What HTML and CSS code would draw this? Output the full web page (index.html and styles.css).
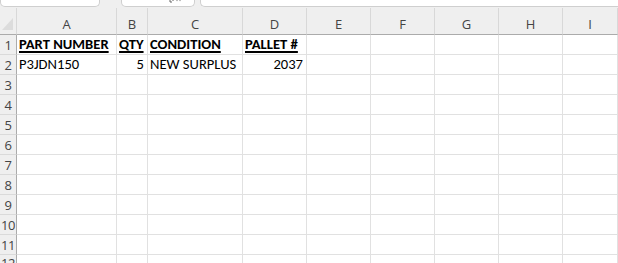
FILE: index.html
```html
<!DOCTYPE html>
<html>
<head>
<meta charset="utf-8">
<link rel="stylesheet" href="styles.css">
</head>
<body>
<div class="topbar">
  <div class="box box1"></div>
  <div class="box box2"><svg class="ghost" width="14" height="4" viewBox="0 0 14 4"><path d="M2 0 v2 h2 M5 0 v1" stroke="#666" stroke-width="1" fill="none"/><circle cx="9" cy="0.5" r="0.7" fill="#999"/><circle cx="12" cy="0.5" r="0.7" fill="#999"/></svg></div>
  <div class="box box3"></div>
</div>
<div class="sheet">
  <div class="corner"><div class="tri"></div></div>
  <div class="ch">A</div><div class="ch">B</div><div class="ch">C</div><div class="ch">D</div><div class="ch">E</div><div class="ch">F</div><div class="ch">G</div><div class="ch">H</div><div class="ch">I</div>

  <div class="rh">1</div>
  <div class="c"><span class="hd">PART NUMBER</span></div>
  <div class="c"><span class="hd">QTY</span></div>
  <div class="c"><span class="hd">CONDITION</span></div>
  <div class="c"><span class="hd">PALLET #</span></div>
  <div class="c"></div><div class="c"></div><div class="c"></div><div class="c"></div><div class="c"></div>

  <div class="rh">2</div>
  <div class="c">P3JDN150</div>
  <div class="c num">5</div>
  <div class="c">NEW SURPLUS</div>
  <div class="c num">2037</div>
  <div class="c"></div><div class="c"></div><div class="c"></div><div class="c"></div><div class="c"></div>

  <div class="rh">3</div><div class="c"></div><div class="c"></div><div class="c"></div><div class="c"></div><div class="c"></div><div class="c"></div><div class="c"></div><div class="c"></div><div class="c"></div>
  <div class="rh">4</div><div class="c"></div><div class="c"></div><div class="c"></div><div class="c"></div><div class="c"></div><div class="c"></div><div class="c"></div><div class="c"></div><div class="c"></div>
  <div class="rh">5</div><div class="c"></div><div class="c"></div><div class="c"></div><div class="c"></div><div class="c"></div><div class="c"></div><div class="c"></div><div class="c"></div><div class="c"></div>
  <div class="rh">6</div><div class="c"></div><div class="c"></div><div class="c"></div><div class="c"></div><div class="c"></div><div class="c"></div><div class="c"></div><div class="c"></div><div class="c"></div>
  <div class="rh">7</div><div class="c"></div><div class="c"></div><div class="c"></div><div class="c"></div><div class="c"></div><div class="c"></div><div class="c"></div><div class="c"></div><div class="c"></div>
  <div class="rh">8</div><div class="c"></div><div class="c"></div><div class="c"></div><div class="c"></div><div class="c"></div><div class="c"></div><div class="c"></div><div class="c"></div><div class="c"></div>
  <div class="rh">9</div><div class="c"></div><div class="c"></div><div class="c"></div><div class="c"></div><div class="c"></div><div class="c"></div><div class="c"></div><div class="c"></div><div class="c"></div>
  <div class="rh">10</div><div class="c"></div><div class="c"></div><div class="c"></div><div class="c"></div><div class="c"></div><div class="c"></div><div class="c"></div><div class="c"></div><div class="c"></div>
  <div class="rh">11</div><div class="c"></div><div class="c"></div><div class="c"></div><div class="c"></div><div class="c"></div><div class="c"></div><div class="c"></div><div class="c"></div><div class="c"></div>
  <div class="rh last">12</div><div class="c"></div><div class="c"></div><div class="c"></div><div class="c"></div><div class="c"></div><div class="c"></div><div class="c"></div><div class="c"></div><div class="c"></div>
</div>
</body>
</html>
```
FILE: styles.css
```css
html, body {
  margin: 0;
  padding: 0;
  width: 618px;
  height: 263px;
  overflow: hidden;
  background: #efefef;
  font-family: Carlito, Lato, "Liberation Sans", sans-serif;
}
.topbar {
  height: 8px;
  display: flex;
  align-items: flex-end;
  background: #efefef;
  overflow: hidden;
}
.box {
  height: 12px;
  background: #fff;
  border: 1px solid #cfcfcf;
  border-top: none;
  border-radius: 0 0 5px 5px;
  box-sizing: border-box;
  margin-bottom: 1px;
  position: relative;
  flex: none;
}
.box1 { width: 100px; }
.box2 { width: 74px; margin-left: 21px; }
.box3 { flex: 1; margin-left: 5px; border-right: none; border-radius: 0 0 0 5px; }
.ghost {
  position: absolute;
  right: 12px;
  bottom: 2px;
}
.sheet {
  display: grid;
  grid-template-columns: 17px 100px 31px 95px 64px 64px 64px 64px 64px 55px;
  grid-auto-rows: 20px;
  grid-template-rows: 27px;
  background: #fff;
  height: 255px;
  overflow: hidden;
}
.corner {
  background: #efefef;
  border-right: 1px solid #d8d8d8;
  border-bottom: 1px solid #ababab;
  position: relative;
}
.tri {
  position: absolute;
  right: 3px;
  bottom: 4px;
  width: 0;
  height: 0;
  border-left: 11px solid transparent;
  border-bottom: 12px solid #dcdcdc;
}
.ch {
  background: #efefef;
  border-right: 1px solid #d8d8d8;
  border-bottom: 1px solid #ababab;
  display: flex;
  align-items: center;
  justify-content: center;
  padding-top: 5px;
  box-sizing: border-box;
  font-family: "Open Sans", "Noto Sans", sans-serif;
  font-size: 13px;
  color: #444;
}
.ch:last-of-type { border-right: none; }
.rh {
  background: #efefef;
  border-right: 1px solid #ababab;
  border-bottom: 1px solid #dadada;
  box-sizing: border-box;
  display: flex;
  align-items: center;
  justify-content: center;
  font-family: "Open Sans", "Noto Sans", sans-serif;
  font-size: 13px;
  letter-spacing: -0.5px;
  color: #444;
  padding-top: 1px;
}
.rh.last { align-items: flex-start; padding-top: 0; line-height: 17px; }
.c {
  border-right: 1px solid #e1e1e1;
  border-bottom: 1px solid #e1e1e1;
  box-sizing: border-box;
  font-size: 14.6px;
  line-height: 19px;
  padding: 0 2px;
  color: #000;
  white-space: nowrap;
}
.num { text-align: right; padding-right: 3px; }
.hd {
  font-weight: bold;
  text-decoration: underline;
  text-decoration-thickness: 1.5px;
  text-underline-offset: 2px;
}
```
